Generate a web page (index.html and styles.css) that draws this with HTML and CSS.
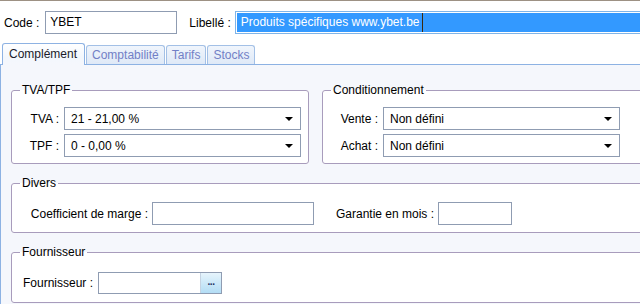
FILE: index.html
```html
<!DOCTYPE html>
<html lang="fr">
<head>
    <meta charset="UTF-8">
    <title>Article YBET</title>
    <link rel="stylesheet" href="styles.css">
</head>
<body>
    <div class="window">
        <div class="header">
            <span class="hlabel">Code :</span>
            <div class="field code">YBET</div>
            <span class="hlabel libelle-label">Libellé :</span>
            <div class="field libelle"><span class="sel">Produits spécifiques www.ybet.be</span><span class="caret"></span></div>
        </div>

        <div class="tabs">
            <div class="tab active">Complément</div>
            <div class="tab">Comptabilité</div>
            <div class="tab">Tarifs</div>
            <div class="tab">Stocks</div>
        </div>

        <div class="page">
            <div class="row">
                <fieldset class="group tva">
                    <legend>TVA/TPF</legend>
                    <div class="grid">
                        <span class="lbl">TVA :</span>
                        <div class="combo"><span>21 - 21,00 %</span><i class="arrow"></i></div>
                        <span class="lbl">TPF :</span>
                        <div class="combo"><span>0 - 0,00 %</span><i class="arrow"></i></div>
                    </div>
                </fieldset>

                <fieldset class="group cond">
                    <legend>Conditionnement</legend>
                    <div class="grid">
                        <span class="lbl">Vente :</span>
                        <div class="combo"><span>Non défini</span><i class="arrow"></i></div>
                        <span class="lbl">Achat :</span>
                        <div class="combo"><span>Non défini</span><i class="arrow"></i></div>
                    </div>
                </fieldset>
            </div>

            <fieldset class="group divers">
                <legend>Divers</legend>
                <div class="line">
                    <span class="lbl coef-label">Coefficient de marge :</span>
                    <div class="field coef"></div>
                    <span class="lbl garantie-label">Garantie en mois :</span>
                    <div class="field garantie"></div>
                </div>
            </fieldset>

            <fieldset class="group fourn">
                <legend>Fournisseur</legend>
                <div class="line">
                    <span class="lbl fourn-label">Fournisseur :</span>
                    <div class="lookup">
                        <div class="lookup-text"></div>
                        <div class="lookup-btn">&middot;&middot;&middot;</div>
                    </div>
                </div>
            </fieldset>
        </div>
    </div>
</body>
</html>
```

FILE: styles.css
```css
body {
    margin: 0;
    font-family: "Liberation Sans", Arial, sans-serif;
    font-size: 12px;
    color: #000;
    background: #fff;
}

.window {
    width: 640px;
    height: 304px;
    box-sizing: border-box;
    overflow: hidden;
    border-top: 1px solid #9d9184;
}

/* header with code / libelle */
.header {
    display: flex;
    align-items: center;
    padding: 10px 0 0 4px;
    height: 23px;
}

.hlabel {
    flex-shrink: 0;
    white-space: nowrap;
    margin-right: 6px;
}

.libelle-label {
    margin-left: 12px;
    margin-right: 4px;
}

.field {
    box-sizing: border-box;
    height: 23px;
    border: 1px solid #8f9cb2;
    background: #fff;
    padding: 0 4px;
    line-height: 21px;
}

.code {
    flex-shrink: 0;
    width: 132px;
}

.libelle {
    flex: 0 0 420px;
    border-color: #7fb4e8;
    padding: 1px;
    line-height: 19px;
    display: flex;
}

.sel {
    background: #3399ff;
    color: #fff;
    padding-left: 4px;
    padding-right: 2px;
    white-space: nowrap;
}

.caret {
    width: 1px;
    background: #3a2a10;
}

.libelle::after {
    content: "";
    flex: 1;
    background: #3399ff;
}

/* tabs */
.tabs {
    display: flex;
    align-items: flex-end;
    gap: 1px;
    margin-top: 9px;
    padding-left: 2px;
    height: 21px;
    border-bottom: 1px solid #8db2e3;
}

.tab {
    box-sizing: border-box;
    height: 19px;
    padding: 0 5px;
    line-height: 18px;
    border: 1px solid #a3c0e6;
    border-bottom: none;
    border-radius: 3px 3px 0 0;
    background: linear-gradient(#f0f5fc, #dfe9f7);
    color: #7280c6;
}

.tab.active {
    height: 22px;
    margin-bottom: -1px;
    padding: 0 7px 0 6px;
    line-height: 21px;
    border-color: #8db2e3;
    background: linear-gradient(#ffffff, #f3f7fd 60%, #f5f7fc);
    color: #1a1a2a;
}

/* tab page */
.page {
    width: 700px;
    border-left: 1px solid #8db2e3;
    background: #f5f7fc;
    padding: 18px 0 0 10px;
    height: 239px;
    box-sizing: border-box;
}

.row {
    display: flex;
    gap: 13px;
}

.group {
    margin: 0;
    padding: 0;
    border: 1px solid #a89cbc;
    border-radius: 3px;
    background: #fff;
    min-width: 0;
}

.group legend {
    margin-left: 8px;
    padding: 0 2px;
    line-height: 14px;
}

.tva {
    width: 298px;
    box-sizing: border-box;
}

.cond {
    width: 360px;
    box-sizing: border-box;
}

.grid {
    display: grid;
    row-gap: 4px;
    column-gap: 5px;
    align-items: center;
    padding: 10px 0 6px 4px;
}

.tva .grid {
    grid-template-columns: 43px 237px;
}

.cond .grid {
    grid-template-columns: 50px 237px;
    padding-left: 5px;
}

.lbl {
    white-space: nowrap;
}

.grid .lbl {
    text-align: right;
}

.combo {
    box-sizing: border-box;
    height: 23px;
    border: 1px solid #8f9cb2;
    background: #fff;
    display: flex;
    align-items: center;
    justify-content: space-between;
    padding: 0 7px 0 6px;
}

.arrow {
    width: 0;
    height: 0;
    border-left: 4px solid transparent;
    border-right: 4px solid transparent;
    border-top: 4px solid #000;
    margin-top: 1px;
}

/* single line groups */
.divers,
.fourn {
    margin-top: 12px;
}

.line {
    display: flex;
    align-items: center;
}

.divers .line {
    padding: 12px 0 7px 17px;
}

.coef-label {
    width: 119px;
    text-align: right;
    margin-right: 4px;
}

.coef {
    width: 162px;
}

.garantie-label {
    width: 101px;
    text-align: right;
    margin: 0 4px 0 19px;
}

.garantie {
    width: 74px;
}

.fourn .line {
    padding: 13px 0 8px 11px;
}

.fourn-label {
    width: 72px;
    margin-right: 3px;
}

.lookup {
    display: flex;
    height: 22px;
    box-sizing: border-box;
    border: 1px solid #8f9cb2;
}

.lookup-text {
    width: 101px;
    background: #fff;
}

.lookup-btn {
    width: 20px;
    border-left: 1px solid #c5d3e2;
    background: linear-gradient(#e6f4fc, #b3ddf5);
    color: #1c2f5e;
    font-size: 10px;
    font-weight: bold;
    line-height: 24px;
    text-align: center;
    letter-spacing: -1px;
}
```
